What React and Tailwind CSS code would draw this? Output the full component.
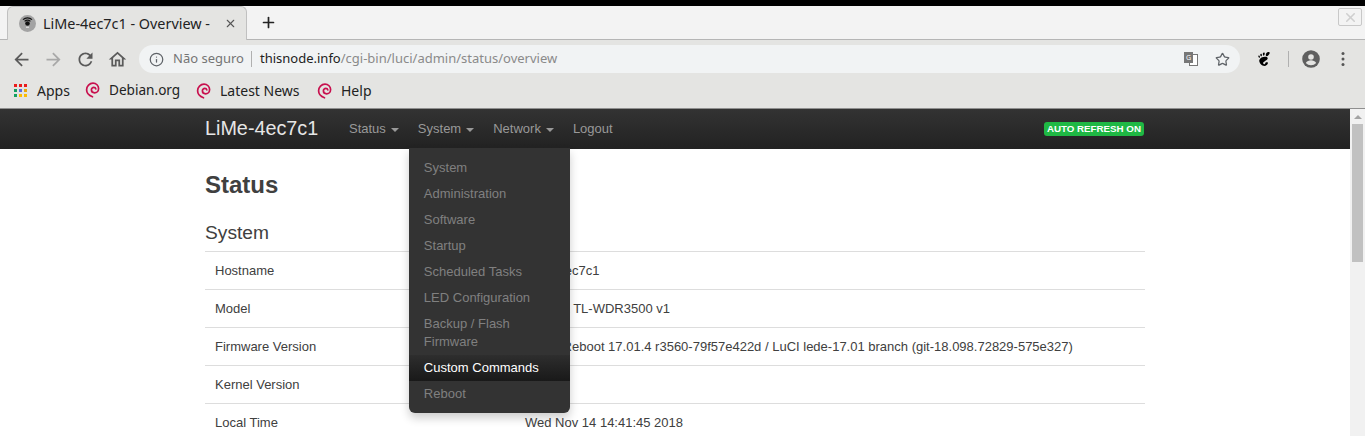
import { Info, Star, Plus, X } from 'lucide-react'
import { SiGnome } from 'react-icons/si'

const menuItems = ['System', 'Administration', 'Software', 'Startup', 'Scheduled Tasks', 'LED Configuration']

const rows = [
  ['Hostname', 'LiMe-4ec7c1'],
  ['Model', 'TP-Link TL-WDR3500 v1'],
  ['Firmware Version', 'LEDE Reboot 17.01.4 r3560-79f57e422d / LuCI lede-17.01 branch (git-18.098.72829-575e327)'],
  ['Kernel Version', '4.4.92'],
  ['Local Time', 'Wed Nov 14 14:41:45 2018'],
]

function Caret() {
  return <span className="ml-[5px] inline-block h-0 w-0 border-x-4 border-t-4 border-x-transparent border-t-[#999] align-middle" />
}

function AppsGrid() {
  const colors = ['#ea1c1c', '#ea1c1c', '#ea1c1c', '#12a060', '#5b6ee1', '#e8a80c', '#12a060', '#fbbc05', '#fbbc05']
  return (
    <div className="grid h-[13px] w-[13px] grid-cols-3 gap-[2px]">
      {colors.map((c, i) => (
        <span key={i} style={{ background: c }} />
      ))}
    </div>
  )
}

function DebianSwirl() {
  return (
    <svg width="15" height="16" viewBox="0 0 15 16" fill="none" stroke="#c8104e" strokeWidth="1.7" strokeLinecap="round">
      <path d="M7.5 14.8C4 13.6 1.6 11 1.6 7.8 1.6 4 4.6 1.2 8 1.2c3.2 0 5.6 2.4 5.6 5.2 0 2.6-2 4.4-4 4.4-1.8 0-3.2-1.3-3.2-3 0-1.4 1.1-2.4 2.4-2.4 1 0 1.8.6 2 1.5" />
    </svg>
  )
}

function Bookmark({ label, className }) {
  return (
    <div className="flex items-center gap-[9px]">
      <DebianSwirl />
      <span className={className}>{label}</span>
    </div>
  )
}

function Favicon() {
  return (
    <svg width="17" height="17" viewBox="0 0 17 17">
      <circle cx="8.5" cy="8.5" r="8.5" fill="#a3a3a3" />
      <circle cx="8.5" cy="8.5" r="2.3" fill="#111" />
      <path d="M4 4.6a6.5 6.5 0 0 1 9 0M5.6 6.4a4 4 0 0 1 5.8 0" stroke="#111" strokeWidth="1.2" fill="none" />
      <path d="M7 12.2h3" stroke="#eee" strokeWidth="1" />
    </svg>
  )
}

function ToolIcon({ d, className, size = 21, fill = '#5a5a5a' }) {
  return (
    <svg className={className} width={size} height={size} viewBox="0 0 24 24" fill={fill}>
      <path d={d} />
    </svg>
  )
}

function ChromeBar() {
  return (
    <div className="bg-[#e4e4e2] font-['Noto_Sans',sans-serif] text-[#333]">
      <div className="h-[6px] bg-black" />
      <div className="relative flex h-[34px] items-end border-b border-[#b5b5b5] bg-[#f3f3f3]">
        <div className="relative z-10 mb-[-1px] ml-[7px] flex h-[34px] w-[240px] items-center rounded-t-[6px] border border-b-0 border-[#c0c0c0] bg-[#e4e4e2] pl-[11px]">
          <Favicon />
          <span className="ml-[7px] text-[14.4px] text-[#222]">LiMe-4ec7c1 - Overview -</span>
          <X className="ml-auto mr-[9px] h-[13px] w-[13px] text-[#555]" strokeWidth={2} />
        </div>
        <Plus className="mb-[8px] ml-[13px] h-[17px] w-[17px] text-[#222]" strokeWidth={2.4} />
        <div className="absolute right-[3px] top-[2px] flex h-[18px] w-[24px] items-center justify-center rounded-[2px] border border-[#c8c8c8]">
          <X className="h-[15px] w-[15px] text-[#cfcfcf]" strokeWidth={2.5} />
        </div>
      </div>
      <div className="flex h-[38px] items-center">
        <ToolIcon className="ml-[11px]" d="M20 11H7.83l5.59-5.59L12 4l-8 8 8 8 1.41-1.41L7.83 13H20v-2z" />
        <ToolIcon className="ml-[11px]" fill="#a8a8a8" d="M4 11h12.17l-5.59-5.59L12 4l8 8-8 8-1.41-1.41L16.17 13H4v-2z" />
        <ToolIcon className="ml-[11px]" d="M17.65 6.35C16.2 4.9 14.21 4 12 4c-4.42 0-7.99 3.58-7.99 8s3.57 8 7.99 8c3.73 0 6.84-2.55 7.73-6h-2.08c-.82 2.33-3.04 4-5.65 4-3.31 0-6-2.69-6-6s2.69-6 6-6c1.66 0 3.14.69 4.22 1.78L13 11h7V4l-2.35 2.35z" />
        <ToolIcon className="ml-[11px]" d="M12 5.69l5 4.5V18h-2v-6H9v6H7v-7.81l5-4.5M12 3L2 12h3v8h6v-6h2v6h6v-8h3L12 3z" />
        <div className="ml-[11px] flex h-[28px] w-[1101px] items-center rounded-full bg-[#f1f3f4] pl-[10px] text-[13px]">
          <Info className="h-[15px] w-[15px] text-[#5f6368]" strokeWidth={2} />
          <span className="ml-[9px] text-[#757575]">Não seguro</span>
          <span className="ml-[7px] mr-[8px] h-[16px] w-px bg-[#b0b0b0]" />
          <span className="text-[#222]">thisnode.info</span>
          <span className="text-[#8a8a8a]">/cgi-bin/luci/admin/status/overview</span>
          <div className="ml-auto mr-[10px] flex items-center gap-[17px]">
            <div className="relative h-[14px] w-[14px]">
              <div className="absolute right-0 top-[2px] h-[12px] w-[9px] border border-[#777] bg-white" />
              <div className="absolute left-0 top-0 flex h-[11px] w-[9px] items-center justify-center bg-[#777] text-[7px] leading-none text-white">G</div>
            </div>
            <Star className="h-[15px] w-[15px] text-[#5f6368]" strokeWidth={2} />
          </div>
        </div>
        <SiGnome className="ml-[17px] h-[14px] w-[14px] text-black" />
        <span className="ml-[17px] h-[16px] w-px bg-[#b0b0b0]" />
        <svg className="ml-[13px]" width="18" height="18" viewBox="0 0 18 18">
          <circle cx="9" cy="9" r="8.8" fill="#5f5f5f" />
          <circle cx="9" cy="7" r="2.8" fill="#e4e4e2" />
          <path d="M3.8 13c1-1.8 3.2-2.7 5.2-2.7s4.2.9 5.2 2.7a7 7 0 0 1-10.4 0z" fill="#e4e4e2" />
        </svg>
        <svg className="ml-[21px]" width="4" height="16" viewBox="0 0 4 16" fill="#555">
          <circle cx="2" cy="2.5" r="1.5" />
          <circle cx="2" cy="8" r="1.5" />
          <circle cx="2" cy="13.5" r="1.5" />
        </svg>
      </div>
      <div className="flex h-[31px] items-center border-b border-[#8f8f8f] pb-[5px] pl-[14px] text-[14px] text-[#222]">
        <AppsGrid />
        <span className="ml-[10px] w-[31px]">Apps</span>
        <div className="ml-[17px] flex items-center gap-[17px]">
          <Bookmark label="Debian.org" className="w-[70px] text-[13.6px]" />
          <Bookmark label="Latest News" className="w-[80px]" />
          <Bookmark label="Help" />
        </div>
      </div>
    </div>
  )
}

function Dropdown() {
  return (
    <div className="absolute left-[-9px] top-[29px] z-20 w-[161px] rounded-b-[6px] bg-[#333] pb-[6px] pt-[7px] text-[13px] leading-[18px] text-[#808080] shadow-[0_5px_10px_rgba(0,0,0,0.2)]">
      {menuItems.map((item) => (
        <div key={item} className="px-[15px] py-[4px]">{item}</div>
      ))}
      <div className="px-[15px] py-[4px]">Backup / Flash Firmware</div>
      <div className="bg-gradient-to-b from-[#2e2e2e] to-[#191919] px-[15px] py-[4px] text-white">Custom Commands</div>
      <div className="px-[15px] py-[4px]">Reboot</div>
    </div>
  )
}

function Navbar() {
  return (
    <div className="h-[40px] bg-gradient-to-b from-[#333] to-[#222]">
      <div className="ml-[205px] flex h-full w-[939px] items-center">
        <span className="w-[144px] text-[19.8px] text-[#e6e6e6]">LiMe-4ec7c1</span>
        <div className="flex items-center gap-[19px] text-[13px] text-[#999]">
          <span>Status<Caret /></span>
          <span className="relative">
            System<Caret />
            <Dropdown />
          </span>
          <span>Network<Caret /></span>
          <span>Logout</span>
        </div>
        <span className="ml-auto rounded-[3px] bg-[#1fb844] px-[3px] text-[9.75px] font-bold leading-[14px] text-white">AUTO REFRESH ON</span>
      </div>
    </div>
  )
}

export default function App() {
  return (
    <div className="flex h-[436px] w-[1365px] flex-col overflow-hidden bg-white font-['Liberation_Sans',sans-serif]">
      <ChromeBar />
      <div className="relative min-h-0 flex-1">
        <Navbar />
        <div className="ml-[205px] w-[940px] text-[#404040]">
          <h1 className="mt-[21px] text-[24px] font-bold leading-[30px]">Status</h1>
          <h2 className="mt-[19px] border-b border-[#ddd] pb-[4px] text-[19.2px] leading-[28px]">System</h2>
          {rows.map(([label, value]) => (
            <div key={label} className="flex h-[38px] items-center border-b border-[#ddd] pl-[10px] text-[13px]">
              <span className="w-[310px]">{label}</span>
              <span>{value}</span>
            </div>
          ))}
        </div>
        <div className="absolute bottom-0 right-0 top-0 flex w-[15px] flex-col items-center bg-[#f1f1f1]">
          <span className="mt-[6px] h-0 w-0 border-x-[4px] border-b-[4px] border-x-transparent border-b-[#a3a3a3]" />
          <span className="mt-[5px] h-[138px] w-[11px] bg-[#c1c1c1]" />
        </div>
      </div>
    </div>
  )
}
